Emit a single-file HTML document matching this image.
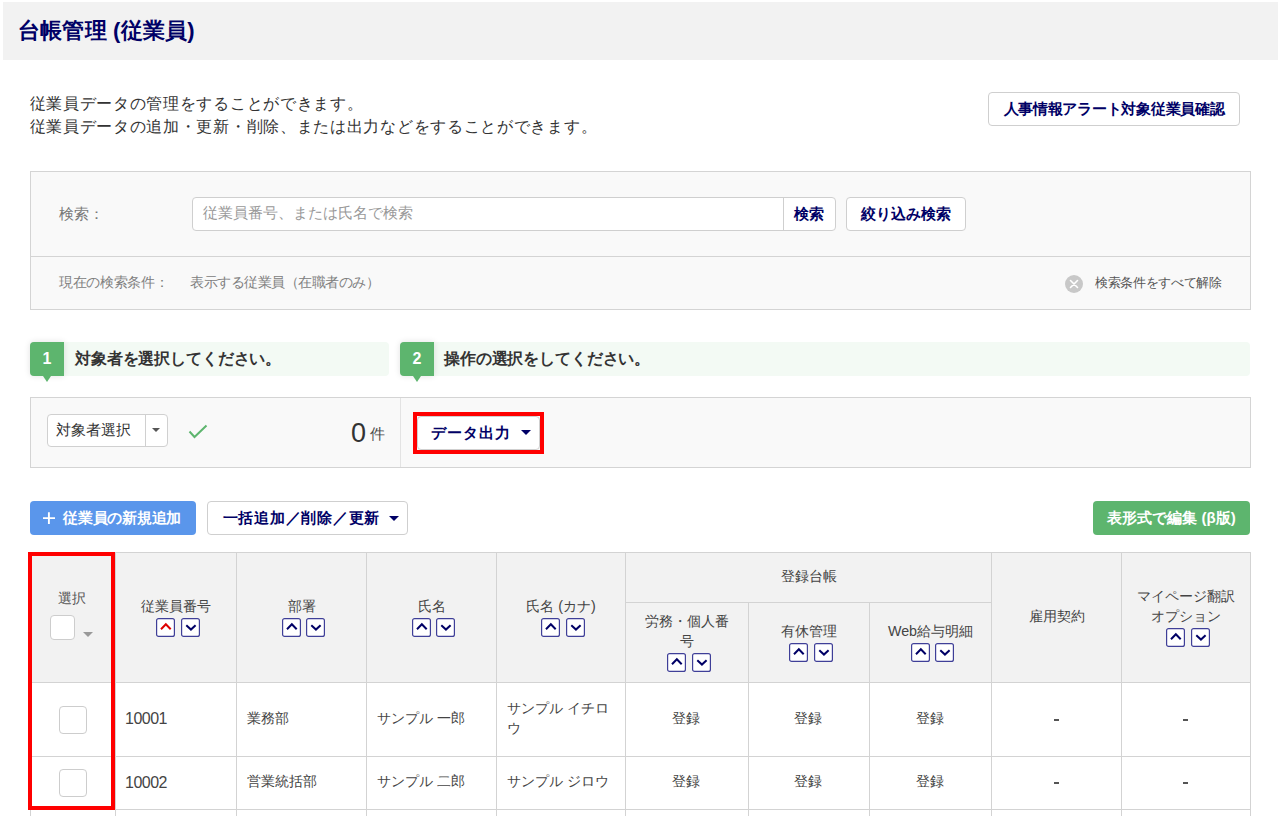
<!DOCTYPE html>
<html lang="ja">
<head>
<meta charset="utf-8">
<style>
*{box-sizing:border-box;margin:0;padding:0}
html,body{width:1280px;height:816px;overflow:hidden;background:#fff}
body{font-family:"Liberation Sans",sans-serif;color:#333;position:relative}
.a{position:absolute}
.nw{white-space:nowrap}
.hdr{left:3px;top:2px;width:1275px;height:58px;background:#f2f2f2}
.title{left:18px;top:18px;letter-spacing:0.2px;font-size:22px;font-weight:bold;color:#000066;line-height:26px}
.desc{left:29.5px;top:91.5px;font-size:16px;letter-spacing:0.7px;line-height:23px;color:#333}
.btn{background:#fff;border:1px solid #cfcfcf;border-radius:4px;color:#000066;font-weight:bold;font-size:15px;text-align:center;white-space:nowrap}
.panel{background:#f9f9f9;border:1px solid #d4d4d4}
.lbl{font-size:15px;color:#777}
.sm{font-size:13.5px;color:#808080}
.stepbar{background:#f3faf4;border-radius:4px}
.badge{background:#5db56e;color:#fff;font-weight:bold;font-size:16px;text-align:center;border-radius:4px 0 0 4px;box-shadow:0 0 6px rgba(0,0,0,.12)}
.badge:after{content:"";position:absolute;left:13px;bottom:-6px;border-left:4px solid transparent;border-right:4px solid transparent;border-top:6px solid #5db56e}
.steptxt{font-size:16px;letter-spacing:-0.15px;font-weight:bold;color:#333}
.tri{width:0;height:0;border-left:5px solid transparent;border-right:5px solid transparent;border-top:5.5px solid #000066}
/* table */
.th{background:#f2f2f2}
.hl{background:#d6d6d6}
.cell{display:flex;flex-direction:column;align-items:center;justify-content:center;text-align:center;font-size:14.3px;line-height:20px;color:#444;padding-bottom:3px}
.sort{display:flex;gap:5.5px;margin-top:2px;margin-left:4px;height:19px}
.sort svg{display:block}
.sb{width:19px;height:19px;border:1.2px solid #3f3f98;border-radius:2px;background:#fff;position:relative}
.sb svg{position:absolute;left:0;top:0}
.td{font-size:14.3px;line-height:20px;color:#444}
.cb{background:#fff;border:1px solid #cdcdcd;border-radius:4px}
</style>
</head>
<body>
<!-- header -->
<div class="a hdr"></div>
<div class="a title nw">台帳管理 (従業員)</div>

<div class="a desc nw">従業員データの管理をすることができます。<br>従業員データの追加・更新・削除、または出力などをすることができます。</div>
<div class="a btn" style="left:988px;top:92px;width:252px;height:34px;line-height:32px;font-size:15px;letter-spacing:-0.28px">人事情報アラート対象従業員確認</div>

<!-- search panel -->
<div class="a panel" style="left:30px;top:171px;width:1221px;height:139px"></div>
<div class="a" style="left:31px;top:256px;width:1219px;height:1px;background:#d4d4d4"></div>
<div class="a lbl nw" style="left:59px;top:204px;line-height:20px">検索：</div>
<div class="a" style="left:192px;top:197px;width:644px;height:34px;background:#fff;border:1px solid #cfcfcf;border-radius:4px"></div>
<div class="a" style="left:783px;top:198px;width:1px;height:32px;background:#cfcfcf"></div>
<div class="a nw" style="left:203px;top:203px;font-size:14.8px;line-height:20px;color:#999">従業員番号、または氏名で検索</div>
<div class="a nw" style="left:794px;top:204px;font-size:14.85px;line-height:20px;color:#000066;font-weight:bold">検索</div>
<div class="a btn" style="left:846px;top:197px;width:120px;height:34px;line-height:32px">絞り込み検索</div>

<div class="a sm nw" style="left:59px;top:273px;line-height:20px;letter-spacing:-0.35px">現在の検索条件：</div>
<div class="a sm nw" style="left:190px;top:273px;line-height:20px;letter-spacing:-0.46px">表示する従業員（在職者のみ）</div>
<div class="a" style="left:1065px;top:275px;width:18px;height:18px;border-radius:50%;background:#c8c8c8"></div>
<svg class="a" style="left:1065px;top:275px" width="18" height="18"><path d="M5.5 5.5L12.5 12.5M12.5 5.5L5.5 12.5" stroke="#fff" stroke-width="1.6" stroke-linecap="round"/></svg>
<div class="a sm nw" style="left:1095px;top:273px;line-height:20px;color:#555;font-size:13px;letter-spacing:-0.35px">検索条件をすべて解除</div>

<!-- steps -->
<div class="a stepbar" style="left:30px;top:342px;width:359px;height:34px"></div>
<div class="a badge" style="left:30px;top:342px;width:34px;height:34px;line-height:34px">1</div>
<div class="a steptxt nw" style="left:75px;top:347.5px;line-height:22px">対象者を選択してください。</div>
<div class="a stepbar" style="left:400px;top:342px;width:850px;height:34px"></div>
<div class="a badge" style="left:400px;top:342px;width:34px;height:34px;line-height:34px">2</div>
<div class="a steptxt nw" style="left:444px;top:347.5px;line-height:22px">操作の選択をしてください。</div>

<!-- op panel -->
<div class="a panel" style="left:30px;top:397px;width:1221px;height:71px"></div>
<div class="a" style="left:400px;top:398px;width:1px;height:69px;background:#e3e3e3"></div>
<div class="a" style="left:47px;top:414px;width:121px;height:33px;background:#fff;border:1px solid #d0d0d0;border-radius:4px"></div>
<div class="a" style="left:145px;top:415px;width:1px;height:31px;background:#d0d0d0"></div>
<div class="a nw" style="left:56px;top:420px;font-size:14.85px;line-height:20px;color:#333">対象者選択</div>
<div class="a tri" style="left:151.5px;top:427.5px;border-top-color:#555;border-left-width:4.3px;border-right-width:4.3px;border-top-width:4.8px"></div>
<svg class="a" style="left:187px;top:422px" width="22" height="18"><path d="M2.5 9.5L7.5 15L19.5 3.5" fill="none" stroke="#5db56e" stroke-width="2"/></svg>
<div class="a nw" style="left:351px;top:417px;font-size:27px;line-height:32px;color:#333">0</div>
<div class="a nw" style="left:369.5px;top:426px;font-size:15px;line-height:16px;color:#4a4a4a">件</div>

<div class="a btn" style="left:417px;top:416px;width:123px;height:34px;line-height:32px;text-align:left;padding-left:13px;letter-spacing:1px">データ出力</div>
<div class="a tri" style="left:521px;top:430px"></div>
<div class="a" style="left:413px;top:412px;width:131px;height:42px;border:4px solid #ff0000"></div>

<!-- action buttons -->
<div class="a nw" style="left:30px;top:501px;width:166px;height:34px;background:#5a96eb;border-radius:4px;color:#fff;font-weight:bold;font-size:15px;line-height:34px;padding-left:33px;letter-spacing:-0.25px">従業員の新規追加</div>
<svg class="a" style="left:42px;top:511px" width="14" height="14"><path d="M1 7.1H13M6.9 1.2V13" stroke="#fff" stroke-width="1.9"/></svg>
<div class="a btn" style="left:207px;top:501px;width:201px;height:34px;line-height:32px;text-align:left;padding-left:14.5px;letter-spacing:0.75px">一括追加／削除／更新</div>
<div class="a tri" style="left:389px;top:516px"></div>
<div class="a nw" style="left:1093px;top:501px;width:157px;height:34px;background:#5db56e;border-radius:4px;color:#fff;font-weight:bold;font-size:15px;line-height:34px;text-align:center">表形式で編集 (β版)</div>

<!-- table -->
<div id="tbl">
<div class="a " style="left:30px;top:552px;width:1220px;height:130px;background:#f2f2f2"></div>
<div class="a " style="left:30px;top:552px;width:1221px;height:1px;background:#d3d3d3"></div>
<div class="a " style="left:30px;top:682px;width:1221px;height:1px;background:#d3d3d3"></div>
<div class="a " style="left:30px;top:756px;width:1221px;height:1px;background:#d3d3d3"></div>
<div class="a " style="left:30px;top:809px;width:1221px;height:1px;background:#d3d3d3"></div>
<div class="a " style="left:625px;top:602px;width:366px;height:1px;background:#d3d3d3"></div>
<div class="a " style="left:30px;top:552px;width:1px;height:264px;background:#d3d3d3"></div>
<div class="a " style="left:115px;top:552px;width:1px;height:264px;background:#d3d3d3"></div>
<div class="a " style="left:236px;top:552px;width:1px;height:264px;background:#d3d3d3"></div>
<div class="a " style="left:366px;top:552px;width:1px;height:264px;background:#d3d3d3"></div>
<div class="a " style="left:496px;top:552px;width:1px;height:264px;background:#d3d3d3"></div>
<div class="a " style="left:625px;top:552px;width:1px;height:264px;background:#d3d3d3"></div>
<div class="a " style="left:748px;top:602px;width:1px;height:214px;background:#d3d3d3"></div>
<div class="a " style="left:869px;top:602px;width:1px;height:214px;background:#d3d3d3"></div>
<div class="a " style="left:991px;top:552px;width:1px;height:264px;background:#d3d3d3"></div>
<div class="a " style="left:1121px;top:552px;width:1px;height:264px;background:#d3d3d3"></div>
<div class="a " style="left:1250px;top:552px;width:1px;height:264px;background:#d3d3d3"></div>
<div class="a cell" style="left:116px;top:553px;width:120px;height:129px"><div class="ht">従業員番号</div><div class="sort"><svg width="19" height="19"><rect x="0.6" y="0.6" width="17.8" height="17.8" rx="2" fill="#fff" stroke="#3f3f98" stroke-width="1.2"/><path d="M5 11.2L9.85 6.2L14.7 11.2" fill="none" stroke="#dd0000" stroke-width="2"/></svg><svg width="19" height="19"><rect x="0.6" y="0.6" width="17.8" height="17.8" rx="2" fill="#fff" stroke="#3f3f98" stroke-width="1.2"/><path d="M5.3 7.2L9.95 11.6L14.6 7.2" fill="none" stroke="#000066" stroke-width="2"/></svg></div></div>
<div class="a cell" style="left:237px;top:553px;width:129px;height:129px"><div class="ht">部署</div><div class="sort"><svg width="19" height="19"><rect x="0.6" y="0.6" width="17.8" height="17.8" rx="2" fill="#fff" stroke="#3f3f98" stroke-width="1.2"/><path d="M5 11.2L9.85 6.2L14.7 11.2" fill="none" stroke="#000066" stroke-width="2"/></svg><svg width="19" height="19"><rect x="0.6" y="0.6" width="17.8" height="17.8" rx="2" fill="#fff" stroke="#3f3f98" stroke-width="1.2"/><path d="M5.3 7.2L9.95 11.6L14.6 7.2" fill="none" stroke="#000066" stroke-width="2"/></svg></div></div>
<div class="a cell" style="left:367px;top:553px;width:129px;height:129px"><div class="ht">氏名</div><div class="sort"><svg width="19" height="19"><rect x="0.6" y="0.6" width="17.8" height="17.8" rx="2" fill="#fff" stroke="#3f3f98" stroke-width="1.2"/><path d="M5 11.2L9.85 6.2L14.7 11.2" fill="none" stroke="#000066" stroke-width="2"/></svg><svg width="19" height="19"><rect x="0.6" y="0.6" width="17.8" height="17.8" rx="2" fill="#fff" stroke="#3f3f98" stroke-width="1.2"/><path d="M5.3 7.2L9.95 11.6L14.6 7.2" fill="none" stroke="#000066" stroke-width="2"/></svg></div></div>
<div class="a cell" style="left:497px;top:553px;width:128px;height:129px"><div class="ht">氏名 (カナ)</div><div class="sort"><svg width="19" height="19"><rect x="0.6" y="0.6" width="17.8" height="17.8" rx="2" fill="#fff" stroke="#3f3f98" stroke-width="1.2"/><path d="M5 11.2L9.85 6.2L14.7 11.2" fill="none" stroke="#000066" stroke-width="2"/></svg><svg width="19" height="19"><rect x="0.6" y="0.6" width="17.8" height="17.8" rx="2" fill="#fff" stroke="#3f3f98" stroke-width="1.2"/><path d="M5.3 7.2L9.95 11.6L14.6 7.2" fill="none" stroke="#000066" stroke-width="2"/></svg></div></div>
<div class="a cell" style="left:626px;top:553px;width:365px;height:49px"><div class="ht">登録台帳</div></div>
<div class="a cell" style="left:626px;top:603px;width:122px;height:79px"><div class="ht">労務・個人番<br>号</div><div class="sort"><svg width="19" height="19"><rect x="0.6" y="0.6" width="17.8" height="17.8" rx="2" fill="#fff" stroke="#3f3f98" stroke-width="1.2"/><path d="M5 11.2L9.85 6.2L14.7 11.2" fill="none" stroke="#000066" stroke-width="2"/></svg><svg width="19" height="19"><rect x="0.6" y="0.6" width="17.8" height="17.8" rx="2" fill="#fff" stroke="#3f3f98" stroke-width="1.2"/><path d="M5.3 7.2L9.95 11.6L14.6 7.2" fill="none" stroke="#000066" stroke-width="2"/></svg></div></div>
<div class="a cell" style="left:749px;top:603px;width:120px;height:79px"><div class="ht">有休管理</div><div class="sort"><svg width="19" height="19"><rect x="0.6" y="0.6" width="17.8" height="17.8" rx="2" fill="#fff" stroke="#3f3f98" stroke-width="1.2"/><path d="M5 11.2L9.85 6.2L14.7 11.2" fill="none" stroke="#000066" stroke-width="2"/></svg><svg width="19" height="19"><rect x="0.6" y="0.6" width="17.8" height="17.8" rx="2" fill="#fff" stroke="#3f3f98" stroke-width="1.2"/><path d="M5.3 7.2L9.95 11.6L14.6 7.2" fill="none" stroke="#000066" stroke-width="2"/></svg></div></div>
<div class="a cell" style="left:870px;top:603px;width:121px;height:79px"><div class="ht">Web給与明細</div><div class="sort"><svg width="19" height="19"><rect x="0.6" y="0.6" width="17.8" height="17.8" rx="2" fill="#fff" stroke="#3f3f98" stroke-width="1.2"/><path d="M5 11.2L9.85 6.2L14.7 11.2" fill="none" stroke="#000066" stroke-width="2"/></svg><svg width="19" height="19"><rect x="0.6" y="0.6" width="17.8" height="17.8" rx="2" fill="#fff" stroke="#3f3f98" stroke-width="1.2"/><path d="M5.3 7.2L9.95 11.6L14.6 7.2" fill="none" stroke="#000066" stroke-width="2"/></svg></div></div>
<div class="a cell" style="left:992px;top:553px;width:129px;height:129px"><div class="ht">雇用契約</div></div>
<div class="a cell" style="left:1122px;top:553px;width:128px;height:129px"><div class="ht">マイページ翻訳<br>オプション</div><div class="sort"><svg width="19" height="19"><rect x="0.6" y="0.6" width="17.8" height="17.8" rx="2" fill="#fff" stroke="#3f3f98" stroke-width="1.2"/><path d="M5 11.2L9.85 6.2L14.7 11.2" fill="none" stroke="#000066" stroke-width="2"/></svg><svg width="19" height="19"><rect x="0.6" y="0.6" width="17.8" height="17.8" rx="2" fill="#fff" stroke="#3f3f98" stroke-width="1.2"/><path d="M5.3 7.2L9.95 11.6L14.6 7.2" fill="none" stroke="#000066" stroke-width="2"/></svg></div></div>
<div class="a nw" style="left:58px;top:588px;font-size:14.3px;line-height:20px;color:#555">選択</div>
<div class="a cb" style="left:50px;top:615px;width:25px;height:25px"></div>
<div class="a tri" style="left:83px;top:632px;border-top-color:#999;border-left-width:5px;border-right-width:5px;border-top-width:5px"></div>
<div class="a cb" style="left:58.5px;top:705.5px;width:28px;height:28px"></div>
<div class="a td" style="left:116px;top:683px;width:120px;height:73px;display:flex;align-items:center;padding-left:9px;padding-bottom:3.5px;font-size:16px;letter-spacing:-0.5px;padding-bottom:1px"><div>10001</div></div>
<div class="a td" style="left:237px;top:683px;width:129px;height:73px;display:flex;align-items:center;padding-left:10px;padding-bottom:3.5px"><div>業務部</div></div>
<div class="a td" style="left:367px;top:683px;width:129px;height:73px;display:flex;align-items:center;padding-left:10px;padding-bottom:3.5px"><div>サンプル 一郎</div></div>
<div class="a td" style="left:497px;top:683px;width:128px;height:73px;display:flex;align-items:center;padding-left:10px;padding-bottom:3.5px"><div>サンプル イチロ<br>ウ</div></div>
<div class="a td" style="left:625px;top:683px;width:122px;height:73px;display:flex;align-items:center;justify-content:center;padding-bottom:3.5px"><div>登録</div></div>
<div class="a td" style="left:748px;top:683px;width:120px;height:73px;display:flex;align-items:center;justify-content:center;padding-bottom:3.5px"><div>登録</div></div>
<div class="a td" style="left:869px;top:683px;width:121px;height:73px;display:flex;align-items:center;justify-content:center;padding-bottom:3.5px"><div>登録</div></div>
<div class="a " style="left:1053.5px;top:718.5px;width:5px;height:2px;background:#555"></div>
<div class="a " style="left:1183.0px;top:718.5px;width:5px;height:2px;background:#555"></div>
<div class="a cb" style="left:58.5px;top:769.0px;width:28px;height:28px"></div>
<div class="a td" style="left:116px;top:757px;width:120px;height:52px;display:flex;align-items:center;padding-left:9px;padding-bottom:3.5px;font-size:16px;letter-spacing:-0.5px;padding-bottom:1px"><div>10002</div></div>
<div class="a td" style="left:237px;top:757px;width:129px;height:52px;display:flex;align-items:center;padding-left:10px;padding-bottom:3.5px"><div>営業統括部</div></div>
<div class="a td" style="left:367px;top:757px;width:129px;height:52px;display:flex;align-items:center;padding-left:10px;padding-bottom:3.5px"><div>サンプル 二郎</div></div>
<div class="a td" style="left:497px;top:757px;width:128px;height:52px;display:flex;align-items:center;padding-left:10px;padding-bottom:3.5px"><div>サンプル ジロウ</div></div>
<div class="a td" style="left:625px;top:757px;width:122px;height:52px;display:flex;align-items:center;justify-content:center;padding-bottom:3.5px"><div>登録</div></div>
<div class="a td" style="left:748px;top:757px;width:120px;height:52px;display:flex;align-items:center;justify-content:center;padding-bottom:3.5px"><div>登録</div></div>
<div class="a td" style="left:869px;top:757px;width:121px;height:52px;display:flex;align-items:center;justify-content:center;padding-bottom:3.5px"><div>登録</div></div>
<div class="a " style="left:1053.5px;top:782.0px;width:5px;height:2px;background:#555"></div>
<div class="a " style="left:1183.0px;top:782.0px;width:5px;height:2px;background:#555"></div>
<div class="a " style="left:28px;top:552px;width:87px;height:258px;border:4px solid #ff0000"></div>
<!--/tbl--></div></body>
</html>
